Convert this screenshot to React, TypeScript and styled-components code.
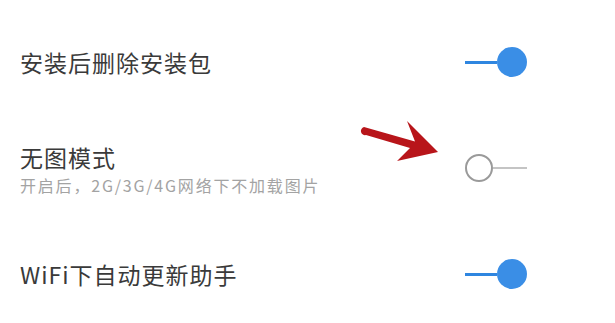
import React from 'react';
import styled, { createGlobalStyle } from 'styled-components';

const GlobalStyle = createGlobalStyle`
  html, body {
    margin: 0;
    padding: 0;
    background: #ffffff;
  }
  body {
    font-family: "Noto Sans CJK SC", "Noto Sans", sans-serif;
  }
`;

const SettingsList = styled.div`
  position: relative;
  width: 615px;
  height: 323px;
  padding-top: 9px;
  box-sizing: border-box;
  overflow: hidden;
  background: #ffffff;
`;

const SettingRow = styled.div`
  height: 106px;
  display: flex;
  align-items: center;
  justify-content: space-between;
  padding: 0 88px 0 20px;
  box-sizing: border-box;
`;

const TextBlock = styled.div`
  display: flex;
  flex-direction: column;
`;

const Title = styled.div`
  color: #3a3a3a;
  font-size: 23px;
  letter-spacing: 1px;
  line-height: 30px;
`;

const Subtitle = styled.div`
  color: #a3a3a3;
  font-size: 16px;
  letter-spacing: 1.8px;
  line-height: 20px;
  margin-top: 3px;
`;

const Toggle = styled.div`
  display: flex;
  align-items: center;
  width: 62px;
  height: 30px;
  flex-direction: ${(p: { $on: boolean }) => (p.$on ? 'row' : 'row-reverse')};
`;

const Track = styled.div<{ $on: boolean }>`
  flex: 1;
  height: ${(p) => (p.$on ? '3px' : '2px')};
  background: ${(p) => (p.$on ? '#2f86e0' : '#c4c4c4')};
`;

const Knob = styled.div<{ $on: boolean }>`
  box-sizing: border-box;
  width: ${(p) => (p.$on ? '30px' : '28px')};
  height: ${(p) => (p.$on ? '30px' : '28px')};
  border-radius: 50%;
  background: ${(p) => (p.$on ? '#3a8ee6' : '#ffffff')};
  border: ${(p) => (p.$on ? 'none' : '2.5px solid #9a9a9a')};
`;

const Arrow = styled.svg`
  position: absolute;
  left: 355px;
  top: 115px;
`;

const Switch: React.FC<{ on: boolean }> = ({ on }) => (
  <Toggle $on={on}>
    <Track $on={on} />
    <Knob $on={on} />
  </Toggle>
);

const settings = [
  { title: '安装后删除安装包', on: true },
  { title: '无图模式', subtitle: '开启后，2G/3G/4G网络下不加载图片', on: false },
  { title: 'WiFi下自动更新助手', on: true },
];

const App: React.FC = () => (
  <>
    <GlobalStyle />
    <SettingsList>
      {settings.map((item, index) => (
        <SettingRow key={index}>
          <TextBlock>
            <Title>{item.title}</Title>
            {item.subtitle && <Subtitle>{item.subtitle}</Subtitle>}
          </TextBlock>
          <Switch on={item.on} />
        </SettingRow>
      ))}
      <Arrow width="90" height="55" viewBox="0 0 90 55">
        <path
          d="M9 12 L60 26.5 L52 6 L83 37 L42 46 L55 33 L11 20 A4 4 0 0 1 9 12 Z"
          fill="#b8151a"
        />
      </Arrow>
    </SettingsList>
  </>
);

export default App;
